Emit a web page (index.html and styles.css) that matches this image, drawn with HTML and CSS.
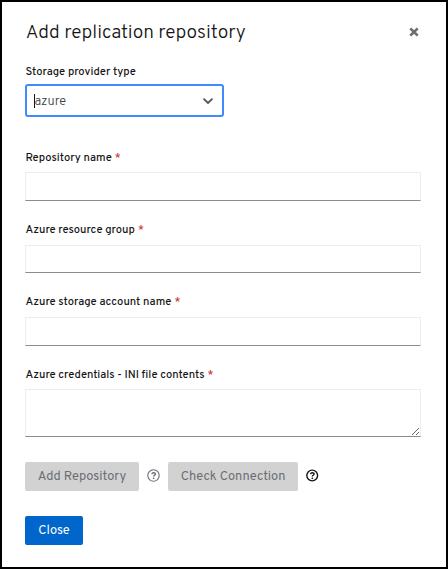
FILE: index.html
```html
<!DOCTYPE html>
<html lang="en">
<head>
<meta charset="utf-8">
<title>Add replication repository</title>
<link rel="stylesheet" href="styles.css">
</head>
<body>
<main class="modal">
  <header class="modal-header">
    <h1>Add replication repository</h1>
    <button class="dismiss" aria-label="Dismiss"><svg width="10" height="10" viewBox="0 0 10 10"><path d="M1.3 1.3 8.7 8.7M8.7 1.3 1.3 8.7"/></svg></button>
  </header>
  <form>
    <div class="field provider">
      <div class="label">Storage provider type</div>
      <div class="select"><span class="value">azure</span><svg width="12" height="8" viewBox="0 0 12 8"><path d="M2 2.1 6 6 10 2.1"/></svg></div>
    </div>
    <div class="field">
      <label class="label" for="name">Repository name</label><span class="required">*</span>
      <input id="name" type="text">
    </div>
    <div class="field group">
      <label class="label" for="group">Azure resource group</label><span class="required">*</span>
      <input id="group" type="text">
    </div>
    <div class="field account">
      <label class="label" for="account">Azure storage account name</label><span class="required">*</span>
      <input id="account" type="text">
    </div>
    <div class="field credentials">
      <label class="label" for="ini">Azure credentials - INI file contents</label><span class="required">*</span>
      <textarea id="ini"></textarea>
    </div>
    <div class="actions">
      <button class="btn add" type="button" disabled>Add Repository</button>
      <svg class="help muted" width="13" height="13" viewBox="0 0 13 13"><circle cx="6.5" cy="6.5" r="5.7"/><path d="M4.8 5.1C5 4.1 5.7 3.7 6.6 3.7c1 0 1.8.6 1.8 1.4 0 1.2-1.8 1.1-1.8 2.3"/><rect x="5.8" y="8.5" width="1.6" height="1.5" rx=".6"/></svg>
      <button class="btn check" type="button" disabled>Check Connection</button>
      <svg class="help" width="13" height="13" viewBox="0 0 13 13"><circle cx="6.2" cy="6.5" r="5.4"/><path d="M4.5 5.1C4.7 4.1 5.4 3.7 6.3 3.7c1 0 1.8.6 1.8 1.4 0 1.2-1.8 1.1-1.8 2.3"/><rect x="5.5" y="8.5" width="1.6" height="1.5" rx=".6"/></svg>
    </div>
    <button class="btn close" type="button">Close</button>
  </form>
</main>
</body>
</html>
```
FILE: styles.css
```css
* { box-sizing: border-box; }
body { margin: 0; color: #151515; font-family: Overpass, Roboto, "Liberation Sans", sans-serif; }
.modal { width: 448px; height: 569px; padding: 18px 25px 0 23px; background: #fff; border: 2px solid #000; }
.modal-header { display: flex; justify-content: space-between; height: 44px; padding-left: .8px; }
h1 { margin: 0; padding-top: 1px; font-size: 19.2px; font-weight: 300; line-height: 25px; white-space: nowrap; }
button { font-family: inherit; }
.dismiss { display: flex; width: 10px; height: 10px; margin: 6.5px 1.7px 0 0; padding: 0; border: 0; background: none; }
.dismiss path { fill: none; stroke: #6a6e73; stroke-width: 2.6; }
.field { display: grid; grid-template-columns: max-content 1fr; grid-template-rows: 22px auto; height: 72px; }
.provider { height: 86px; grid-template-rows: 20px auto; }
.group { height: 72px; grid-template-rows: 23px auto; }
.account { height: 73px; grid-template-rows: 23px auto; }
.credentials { height: 95px; }
.label { padding: 1px 0 0 .4px; font-size: 11.2px; font-weight: 500; line-height: 15px; white-space: nowrap; }
.required { padding: 1px 0 0 3px; color: #c9190b; font-size: 11.2px; line-height: 15px; }
.select { grid-column: 1 / -1; display: flex; align-items: center; justify-content: space-between; width: 199px; height: 33px; padding: 1px 8px 0 7px; border: 2px solid #3d8bfd; border-radius: 3px; }
.value { height: 14px; border-left: 1px solid #151515; color: #3c3f42; font-size: 12.8px; font-weight: 300; line-height: 17px; text-indent: -.6px; }
.select path { fill: none; stroke: #4f5255; stroke-width: 1.8; stroke-linecap: round; }
input, textarea { grid-column: 1 / -1; display: block; width: 396px; height: 29px; margin: 0; padding: 4px 8px; border: 1px solid #ededed; border-bottom-color: #8a8d90; border-radius: 0; background: #fff; outline: 0; }
.group input { height: 28px; }
textarea { height: 48px; resize: vertical; }
.actions { display: flex; align-items: center; height: 29px; margin-bottom: 25px; }
.btn { display: flex; align-items: center; justify-content: center; height: 29px; padding: 2px 0 0; border: 0; border-radius: 2px; font-size: 12.8px; line-height: 17px; white-space: nowrap; }
.btn:disabled { background: #d2d2d2; color: #6a6e73; }
.add { width: 114px; }
.check { width: 130px; }
.close { width: 58px; background: #06c; color: #fff; }
.help { width: 13px; margin: -2px 8px 0; color: #151515; flex: none; }
.help circle, .help path { fill: none; stroke: currentColor; stroke-width: 1.4; }
.help rect { fill: currentColor; }
.muted { color: #6a6e73; }
.muted circle { stroke-width: 1.1; }
```
